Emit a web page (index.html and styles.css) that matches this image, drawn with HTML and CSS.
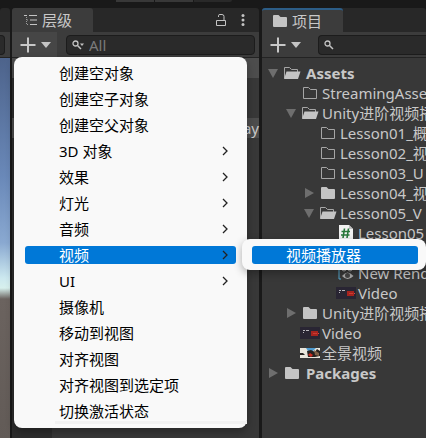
FILE: index.html
```
<!DOCTYPE html>
<html lang="zh-CN">
<head>
<meta charset="utf-8">
<meta name="viewport" content="width=device-width, initial-scale=1">
<title>层级</title>
<link rel="stylesheet" href="styles.css">
</head>
<body>
<svg class="symbols" aria-hidden="true">
  <symbol id="plus" viewBox="0 0 16 16"><path d="M8 0.500V15.500M0.500 8H15.500" fill="none" stroke="#c8c8c8" stroke-width="2"/></symbol>
  <symbol id="caret" viewBox="0 0 10 6"><path d="M0 0H10L5 6Z" fill="#c4c4c4"/></symbol>
  <symbol id="open" viewBox="0 0 10 10"><path d="M0 1H10L5 10Z" fill="#6e6e6e"/></symbol>
  <symbol id="closed" viewBox="0 0 10 10"><path d="M1 0L10 5L1 10Z" fill="#6e6e6e"/></symbol>
  <symbol id="folder" viewBox="0 0 16 14"><path d="M1 2Q1 1 2 1H6.500L8.500 3H14Q15 3 15 4V12Q15 13 14 13H2Q1 13 1 12Z" fill="#c4c4c4"/></symbol>
  <symbol id="folder-empty" viewBox="0 0 16 14"><path d="M1.500 12.500V1.500H6.500L8.500 3.500H14.500V12.500Z" fill="none" stroke="#a6a6a6"/></symbol>
  <symbol id="folder-open" viewBox="0 0 18 14"><path d="M1.500 12V1.500H6.500L8.500 3.500H14.500V6" fill="none" stroke="#a6a6a6"/><path d="M1 13L3.500 5.500H17.500L15 13Z" fill="#c4c4c4"/></symbol>
  <symbol id="thumb" viewBox="0 0 20 12"><path d="M0 0H20V12H0Z" fill="#292533"/><path d="M3 3.500h2M6 3.500h3M3 5.500h1" stroke="#b9b7bd"/><path d="M11 4H18V9H11Z" fill="#a5231e"/><path d="M13 6.500h4" stroke="#c93a31"/><path d="M18 6.500h1" stroke="#d84c41"/></symbol>
  <symbol id="chevron" viewBox="0 0 6 10"><path d="M1 1L5 5L1 9" fill="none" stroke="#222" stroke-width="1.300"/></symbol>
</svg>

<div class="strip"><span></span><span></span><span></span></div>
<main class="editor">
  <section class="scene">
    <div class="tabs"></div>
    <div class="toolbar"><div class="field-end"></div></div>
    <div class="sky"></div>
  </section>

  <section class="panel hierarchy">
    <header class="tabs">
      <div class="tab">
        <svg width="14" height="12" viewBox="0 0 14 12"><path d="M0 1.500H3M5 1.500H13M6 6H13M6 10.500H13" stroke="#c4c4c4" fill="none"/><path d="M2.500 3V10.500M3 6H4M3 10.500H4" stroke="#999" stroke-dasharray="1 1" fill="none"/></svg>
        <span>层级</span>
      </div>
      <div class="actions">
        <button aria-label="锁定"><svg width="11" height="12" viewBox="0 0 11 12"><path d="M0.500 6.500H9.500V11.500H0.500ZM2.500 3V1.500Q2.500 0.500 4 0.500H6Q8 0.500 8 2.500V6" fill="none" stroke="#c4c4c4"/></svg></button>
        <button aria-label="更多"><svg width="4" height="12" viewBox="0 0 4 12"><circle cx="2" cy="1.500" r="1.500" fill="#c4c4c4"/><circle cx="2" cy="6" r="1.500" fill="#c4c4c4"/><circle cx="2" cy="10.500" r="1.500" fill="#c4c4c4"/></svg></button>
      </div>
    </header>
    <div class="toolbar">
      <button class="add lit" aria-label="创建"><svg width="16" height="16"><use href="#plus"/></svg><svg width="10" height="6"><use href="#caret"/></svg></button>
      <label class="search">
        <svg width="12" height="10" viewBox="0 0 12 10"><circle cx="3.500" cy="3.500" r="2.500" fill="none" stroke="#c4c4c4" stroke-width="1.300"/><path d="M5.500 5.500L9 9" stroke="#c4c4c4" stroke-width="1.500"/><path d="M8 3.500H12L10 6Z" fill="#c4c4c4"/></svg>
        <input type="text" placeholder="All" aria-label="搜索层级">
      </label>
    </div>
    <ul class="objects">
      <li class="scene-row"></li><li></li><li></li><li class="scene-row">ay</li>
    </ul>
    <div class="menu" role="menu">
      <button role="menuitem">创建空对象</button>
      <button role="menuitem">创建空子对象</button>
      <button role="menuitem">创建空父对象</button>
      <button role="menuitem">3D 对象<svg width="6" height="10"><use href="#chevron"/></svg></button>
      <button role="menuitem">效果<svg width="6" height="10"><use href="#chevron"/></svg></button>
      <button role="menuitem">灯光<svg width="6" height="10"><use href="#chevron"/></svg></button>
      <button role="menuitem">音频<svg width="6" height="10"><use href="#chevron"/></svg></button>
      <button role="menuitem" class="active">视频<svg width="6" height="10"><use href="#chevron"/></svg></button>
      <button role="menuitem">UI<svg width="6" height="10"><use href="#chevron"/></svg></button>
      <button role="menuitem">摄像机</button>
      <button role="menuitem">移动到视图</button>
      <button role="menuitem">对齐视图</button>
      <button role="menuitem">对齐视图到选定项</button>
      <button role="menuitem">切换激活状态</button>
      <div class="submenu" role="menu"><button role="menuitem" class="active">视频播放器</button></div>
    </div>
  </section>

  <section class="panel project">
    <header class="tabs">
      <div class="tab focused"><svg width="16" height="14"><use href="#folder"/></svg><span>项目</span></div>
    </header>
    <div class="toolbar">
      <button class="add" aria-label="添加资源"><svg width="16" height="16"><use href="#plus"/></svg><svg width="10" height="6"><use href="#caret"/></svg></button>
      <label class="search">
        <svg width="10" height="10" viewBox="0 0 10 10"><circle cx="3.500" cy="3.500" r="2.500" fill="none" stroke="#c4c4c4" stroke-width="1.300"/><path d="M5.500 5.500L9 9" stroke="#c4c4c4" stroke-width="1.500"/></svg>
        <input type="text" aria-label="搜索项目">
      </label>
    </div>
    <ul class="tree">
      <li class="root"><svg class="arrow"><use href="#open"/></svg><span class="icon"><svg width="18" height="14"><use href="#folder-open"/></svg></span>Assets</li>
      <li class="d1"><span class="arrow"></span><span class="icon"><svg width="16" height="14"><use href="#folder-empty"/></svg></span>StreamingAssets</li>
      <li class="d1"><svg class="arrow"><use href="#open"/></svg><span class="icon"><svg width="18" height="14"><use href="#folder-open"/></svg></span>Unity进阶视频播</li>
      <li class="d2"><span class="arrow"></span><span class="icon"><svg width="16" height="14"><use href="#folder-empty"/></svg></span>Lesson01_概</li>
      <li class="d2"><span class="arrow"></span><span class="icon"><svg width="16" height="14"><use href="#folder-empty"/></svg></span>Lesson02_视</li>
      <li class="d2"><span class="arrow"></span><span class="icon"><svg width="16" height="14"><use href="#folder-empty"/></svg></span>Lesson03_U</li>
      <li class="d2"><svg class="arrow"><use href="#closed"/></svg><span class="icon"><svg width="16" height="14"><use href="#folder"/></svg></span>Lesson04_视</li>
      <li class="d2"><svg class="arrow"><use href="#open"/></svg><span class="icon"><svg width="18" height="14"><use href="#folder-open"/></svg></span>Lesson05_V</li>
      <li class="d3"><span class="arrow"></span><span class="icon"><svg width="16" height="18" viewBox="0 0 16 18"><path d="M1 1H11L15 5V17H1Z" fill="#f2f2f2"/><path d="M11 1V5H15Z" fill="#bdbdbd"/><path d="M6.500 4.500L5 14M10.500 4.500L9 14M3.500 7.500H12M3 11H11.500" stroke="#28783a" stroke-width="1.600" fill="none"/></svg></span>Lesson05</li>
      <li></li>
      <li class="d3"><span class="arrow"></span><span class="icon"><svg width="16" height="16" viewBox="0 0 16 16"><path d="M3 1H1V14H3" fill="none" stroke="#54a8cf"/><circle cx="6" cy="4" r="2" fill="none" stroke="#aaa"/><circle cx="12" cy="4" r="2" fill="none" stroke="#aaa"/><path d="M4 11Q9.500 4 15.500 11Q9.500 17 4 11Z" fill="#aaa"/><circle cx="9.500" cy="10.500" r="2.500" fill="#444"/></svg></span>New Render</li>
      <li class="d3"><span class="arrow"></span><span class="icon"><svg width="20" height="12"><use href="#thumb"/></svg></span>Video</li>
      <li class="d1"><svg class="arrow"><use href="#closed"/></svg><span class="icon"><svg width="16" height="14"><use href="#folder"/></svg></span>Unity进阶视频播</li>
      <li class="d1"><span class="arrow"></span><span class="icon"><svg width="20" height="12"><use href="#thumb"/></svg></span>Video</li>
      <li class="d1"><span class="arrow"></span><span class="icon"><svg width="20" height="10" viewBox="0 0 20 10"><path d="M0 0H20V10H0Z" fill="#e9e6dc"/><path d="M6 0H16L13 3H8Z" fill="#4e9bd0"/><path d="M0 5L3 5L5 7H0ZM7 3L11 2L15 4L17 1L20 3V8L15 9H8Z" fill="#26221f"/><path d="M14 2L19 5V8L15 7Z" fill="#806147"/><path d="M8 7L10 5L13 7L11 9Z" fill="#cf2c21"/></svg></span>全景视频</li>
      <li class="root"><svg class="arrow"><use href="#closed"/></svg><span class="icon"><svg width="16" height="14"><use href="#folder"/></svg></span>Packages</li>
    </ul>
  </section>
</main>
</body>
</html>
```
FILE: styles.css
```
* {
  box-sizing: border-box;
}

body {
  margin: 0;
  min-height: 100vh;
  display: flex;
  flex-direction: column;
  overflow: hidden;
  background: #191919;
  color: #c8c8c8;
  font: 15px/20px "Noto Sans", "Noto Sans CJK SC", sans-serif;
}

.symbols {
  position: absolute;
  width: 0;
  height: 0;
}

svg {
  flex: none;
}

button {
  display: flex;
  align-items: center;
  padding: 0;
  border: 0;
  background: none;
  color: inherit;
  font: inherit;
}

ul {
  margin: 0;
  padding: 0;
  list-style: none;
}

.strip {
  display: flex;
  gap: 1px;
  height: 8px;
  padding-left: 116px;
}

.strip span {
  width: 38px;
  height: 2px;
  background: #383838;
}

.strip span:last-child {
  background: #292929;
  border-radius: 0 0 3px 0;
}

.editor {
  flex: 1;
  display: grid;
  grid-template-columns: 10px 247px minmax(0, 1fr);
  column-gap: 2px;
}

.scene,
.panel {
  display: flex;
  flex-direction: column;
  min-width: 0;
}

.hierarchy {
  position: relative;
}

.project {
  margin-left: 1px;
}

.tabs {
  display: flex;
  justify-content: space-between;
  height: 24px;
  background: #282828;
  border-radius: 3px 3px 0 0;
}

.tab {
  display: flex;
  align-items: center;
  gap: 4px;
  width: 81px;
  padding-left: 10px;
  background: #3c3c3c;
  border-radius: 3px 3px 0 0;
}

.hierarchy .tab {
  padding-left: 12px;
}

.tab.focused {
  border-top: 2px solid #2c5d87;
}

.actions {
  display: flex;
  gap: 14px;
  padding-right: 14px;
}

.toolbar {
  display: flex;
  align-items: center;
  height: 26px;
  background: #3c3c3c;
  border-bottom: 1px solid #232323;
}

.field-end {
  width: 5px;
  height: 20px;
  background: #2a2a2a;
  border: 1px solid #1c1c1c;
  border-left: 0;
  border-radius: 0 4px 4px 0;
}

.add {
  flex: none;
  gap: 5px;
  width: 45px;
  height: 25px;
  padding-left: 8px;
}

.add.lit {
  background: #464646;
}

.search {
  flex: 1;
  display: flex;
  align-items: center;
  gap: 5px;
  min-width: 0;
  height: 20px;
  margin: 0 4px 0 9px;
  padding-left: 5px;
  background: #2a2a2a;
  border: 1px solid #1c1c1c;
  border-radius: 4px;
}

.project .search {
  margin: 0 0 0 11px;
  border-right: 0;
  border-radius: 4px 0 0 4px;
}

.search input {
  flex: 1;
  min-width: 0;
  padding: 0;
  border: 0;
  outline: 0;
  background: none;
  color: #c8c8c8;
  font: inherit;
}

.search input::placeholder {
  color: #7a7a7a;
  opacity: 1;
}

.sky {
  flex: 1;
  background: linear-gradient(#4d638b 0, #6a89b9 120px, #8aa9d1 185px, #cce8ef 220px, #d7f0ed 230px, #6b635f 241px, #625b57 100%);
}

.objects {
  flex: 1;
  background: linear-gradient(to right, #2d2d2d 40px, #383838 40px);
}

.objects li {
  height: 20px;
  text-align: right;
}

.objects .scene-row {
  background: #4d4d4d;
}

.menu {
  position: absolute;
  top: 49px;
  left: 2px;
  right: 12px;
  padding: 3px 11px 0;
  background: #f9f9f9;
  border-radius: 8px;
  box-shadow: 0 4px 8px rgba(0, 0, 0, 0.3);
  color: #000;
}

.menu::after {
  content: "";
  position: absolute;
  right: 0;
  bottom: 4px;
  left: 41px;
  height: 3px;
  background: #f1f1f1;
}

.menu button {
  width: 100%;
  height: 18px;
  margin: 4px 0 8px;
  padding: 0 8px 0 34px;
  justify-content: space-between;
  border-radius: 3px;
  white-space: nowrap;
}

.menu .active {
  background: #0078d7;
  color: #fff;
}

.submenu {
  position: absolute;
  top: 182px;
  left: 228px;
  width: 184px;
  padding: 7px 8px 6px 10px;
  background: #f9f9f9;
  border-radius: 8px;
  box-shadow: 0 3px 8px rgba(0, 0, 0, 0.3);
  z-index: 2;
}

.submenu button {
  margin: 0;
}

.tree {
  flex: 1;
  padding-top: 5px;
  background: #383838;
}

.tree li {
  display: flex;
  align-items: center;
  height: 20px;
  padding-left: 6px;
  white-space: nowrap;
}

.tree .d1 {
  padding-left: 24px;
}

.tree .d2 {
  padding-left: 42px;
}

.tree .d3 {
  padding-left: 60px;
}

.tree .root {
  font-weight: bold;
}

.arrow {
  flex: none;
  width: 10px;
  height: 10px;
}

.icon {
  flex: none;
  display: flex;
  justify-content: center;
  width: 20px;
  margin: 0 2px 0 4px;
}

.root .icon {
  margin-right: 4px;
}
```
